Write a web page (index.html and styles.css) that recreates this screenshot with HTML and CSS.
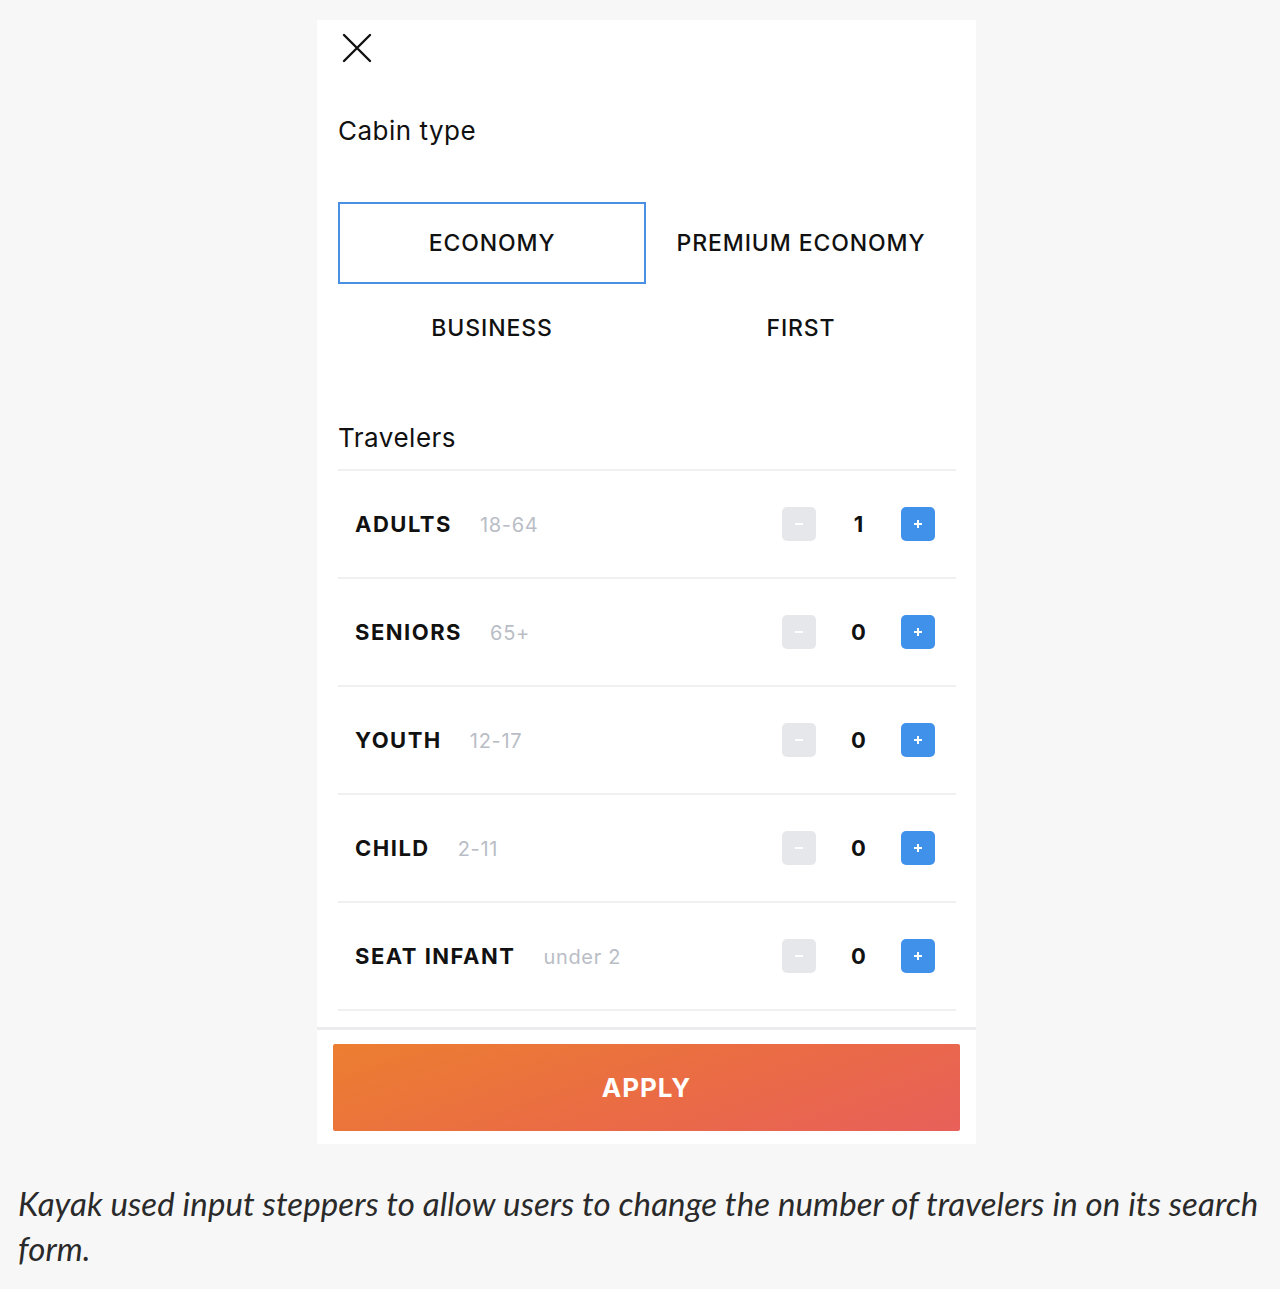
FILE: index.html
```html
<!DOCTYPE html>
<html lang="en">
<head>
<meta charset="utf-8">
<title>Kayak travelers</title>
<link rel="stylesheet" href="styles.css">
</head>
<body>
<div class="card">
  <div class="content">
    <div class="close-row">
      <svg class="close" width="30" height="30" viewBox="0 0 30 30"><path d="M2 2 L28 28 M28 2 L2 28" stroke="#111" stroke-width="2.4" stroke-linecap="round" fill="none"/></svg>
    </div>
    <h2 class="heading heading-cabin">Cabin type</h2>
    <div class="cabin-grid">
      <div class="cabin selected">ECONOMY</div>
      <div class="cabin">PREMIUM ECONOMY</div>
      <div class="cabin">BUSINESS</div>
      <div class="cabin">FIRST</div>
    </div>
    <h2 class="heading heading-travelers">Travelers</h2>
    <div class="rows">
      <div class="row"><div class="label"><span class="name">ADULTS</span><span class="age">18-64</span></div><div class="stepper"><span class="btn minus"><svg width="12" height="12" viewBox="0 0 12 12"><path d="M2 6h8" stroke="#fff" stroke-width="2"/></svg></span><span class="count">1</span><span class="btn plus"><svg width="12" height="12" viewBox="0 0 12 12"><path d="M2 6h8M6 2v8" stroke="#fff" stroke-width="2"/></svg></span></div></div>
      <div class="row"><div class="label"><span class="name">SENIORS</span><span class="age">65+</span></div><div class="stepper"><span class="btn minus"><svg width="12" height="12" viewBox="0 0 12 12"><path d="M2 6h8" stroke="#fff" stroke-width="2"/></svg></span><span class="count">0</span><span class="btn plus"><svg width="12" height="12" viewBox="0 0 12 12"><path d="M2 6h8M6 2v8" stroke="#fff" stroke-width="2"/></svg></span></div></div>
      <div class="row"><div class="label"><span class="name">YOUTH</span><span class="age">12-17</span></div><div class="stepper"><span class="btn minus"><svg width="12" height="12" viewBox="0 0 12 12"><path d="M2 6h8" stroke="#fff" stroke-width="2"/></svg></span><span class="count">0</span><span class="btn plus"><svg width="12" height="12" viewBox="0 0 12 12"><path d="M2 6h8M6 2v8" stroke="#fff" stroke-width="2"/></svg></span></div></div>
      <div class="row"><div class="label"><span class="name">CHILD</span><span class="age">2-11</span></div><div class="stepper"><span class="btn minus"><svg width="12" height="12" viewBox="0 0 12 12"><path d="M2 6h8" stroke="#fff" stroke-width="2"/></svg></span><span class="count">0</span><span class="btn plus"><svg width="12" height="12" viewBox="0 0 12 12"><path d="M2 6h8M6 2v8" stroke="#fff" stroke-width="2"/></svg></span></div></div>
      <div class="row"><div class="label"><span class="name">SEAT INFANT</span><span class="age">under 2</span></div><div class="stepper"><span class="btn minus"><svg width="12" height="12" viewBox="0 0 12 12"><path d="M2 6h8" stroke="#fff" stroke-width="2"/></svg></span><span class="count">0</span><span class="btn plus"><svg width="12" height="12" viewBox="0 0 12 12"><path d="M2 6h8M6 2v8" stroke="#fff" stroke-width="2"/></svg></span></div></div>
    </div>
  </div>
  <div class="footer">
    <div class="apply">APPLY</div>
  </div>
</div>
<p class="caption">Kayak used input steppers to allow users to change the number of travelers in on its search form.</p>
</body>
</html>
```

FILE: styles.css
```css
* { box-sizing: border-box; }
body {
  margin: 0;
  background: #f7f7f7;
  font-family: Inter, "Noto Sans", sans-serif;
  color: #111;
}
.card {
  width: 659px;
  margin: 20px 0 0 317px;
  background: #fff;
}
.content {
  padding: 0 20px 16px 21px;
}
.close-row {
  height: 47px;
  padding: 13px 0 0 4px;
}
.close { display: block; }
.heading {
  margin: 0;
  font-weight: 400;
  font-size: 26px;
  line-height: 32px;
  color: #111;
  letter-spacing: 0.5px;
}
.heading-cabin { margin-top: 48px; }
.cabin-grid {
  margin-top: 55px;
  display: grid;
  grid-template-columns: 308px 1fr;
  grid-auto-rows: 82px;
  row-gap: 3px;
}
.cabin {
  display: flex;
  align-items: center;
  justify-content: center;
  font-size: 23px;
  font-weight: 500;
  letter-spacing: 0.9px;
  color: #111;
}
.cabin.selected {
  border: 2.5px solid #4a90e2;
}
.heading-travelers { margin-top: 53px; }
.rows {
  margin-top: 15px;
  border-top: 2px solid #eff0f2;
}
.row {
  height: 108px;
  border-bottom: 2px solid #eff0f2;
  display: flex;
  align-items: center;
  justify-content: space-between;
  padding: 0 21px 0 17px;
}
.label { display: flex; align-items: baseline; gap: 28px; }
.name {
  font-size: 22px;
  font-weight: 700;
  letter-spacing: 1.5px;
  color: #111;
}
.age {
  font-size: 20px;
  font-weight: 400;
  letter-spacing: 0.7px;
  color: #b9bdc6;
}
.stepper { display: flex; align-items: center; }
.btn {
  width: 34px;
  height: 34px;
  border-radius: 5px;
  display: flex;
  align-items: center;
  justify-content: center;
}
.minus { background: #e6e7ea; }
.plus { background: #4091ea; }
.count {
  width: 85px;
  text-align: center;
  font-size: 22px;
  font-weight: 700;
}
.footer {
  border-top: 3px solid #ececee;
  padding: 14px 16px 13px 16px;
}
.apply {
  height: 87px;
  border-radius: 2px;
  background: linear-gradient(160deg, #ec7e30 0%, #ea6b45 55%, #e8605a 100%);
  color: #fff;
  font-size: 26px;
  font-weight: 700;
  letter-spacing: 1px;
  display: flex;
  align-items: center;
  justify-content: center;
}
.caption {
  margin: 37px 0 0 0;
  padding: 0 18px;
  font-family: Lato, "Open Sans", sans-serif;
  font-style: italic;
  font-size: 33px;
  line-height: 45px;
  letter-spacing: 0.1px;
  color: #2a2a2a;
}
```
